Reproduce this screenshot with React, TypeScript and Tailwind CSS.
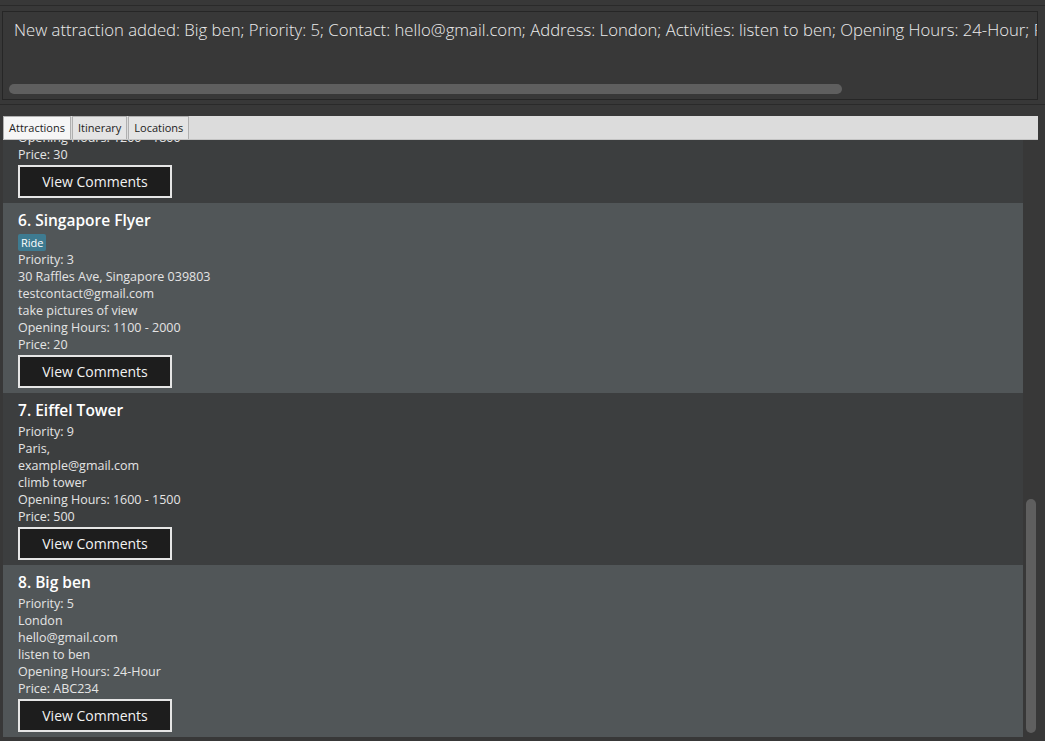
import React from 'react'

type Attraction = {
  index: number
  name: string
  tag?: string
  lines: string[]
}

const attractions: Attraction[] = [
  {
    index: 6,
    name: 'Singapore Flyer',
    tag: 'Ride',
    lines: ['Priority: 3', '30 Raffles Ave, Singapore 039803', 'testcontact@gmail.com', 'take pictures of view', 'Opening Hours: 1100 - 2000', 'Price: 20'],
  },
  {
    index: 7,
    name: 'Eiffel Tower',
    lines: ['Priority: 9', 'Paris,', 'example@gmail.com', 'climb tower', 'Opening Hours: 1600 - 1500', 'Price: 500'],
  },
  {
    index: 8,
    name: 'Big ben',
    lines: ['Priority: 5', 'London', 'hello@gmail.com', 'listen to ben', 'Opening Hours: 24-Hour', 'Price: ABC234'],
  },
]

const CommentsButton = () => (
  <button className="mt-[2px] h-[33px] w-[154px] border-2 border-[#e6e6e6] bg-[#1d1d1d] text-[14px] text-[#f2f2f2]">
    View Comments
  </button>
)

const Card = ({ item, odd }: { item: Attraction; odd: boolean }) => (
  <div className={`px-[15px] pt-[6px] pb-[5px] ${odd ? 'bg-[#515658]' : 'bg-[#3c3e3f]'}`}>
    <div className="h-[22px] text-[15.5px] font-semibold leading-[22px] text-white">
      {item.index}. {item.name}
    </div>
    {item.tag ? (
      <div className="mt-[2px] flex h-[18px] items-end">
        <span className="h-[17px] rounded-[2px] bg-[#3e7b91] px-[3px] text-[11px] leading-[17px] text-white">{item.tag}</span>
      </div>
    ) : (
      <div className="h-[2px]" />
    )}
    <div className="text-[12.5px] leading-[17px] text-[#e4e4e4]">
      {item.lines.map((l) => (
        <div key={l}>{l}</div>
      ))}
    </div>
    <CommentsButton />
  </div>
)

export default function App() {
  return (
    <div className="h-[741px] w-[1045px] overflow-hidden bg-[#383838]" style={{ fontFamily: '"Open Sans", "Noto Sans", sans-serif' }}>
      <div className="h-[5px]" />
      <div className="h-px bg-[#2a2a2a]" />
      <div className="px-[2px] pt-[5px] pr-[7px]">
        <div className="relative h-[89px] overflow-hidden border border-[#262626] bg-[#383838]">
          <div className="whitespace-nowrap pl-[11px] pt-[7px] text-[16.7px] font-light leading-[22px] text-[#ececec]">
            New attraction added: Big ben; Priority: 5; Contact: hello@gmail.com; Address: London; Activities: listen to ben; Opening Hours: 24-Hour; Price: ABC234; Tags: Ride
          </div>
          <div className="absolute left-[6px] top-[72px] h-[10px] w-[833px] rounded-[5px] bg-[#5f5f5f]" />
        </div>
      </div>
      <div className="mt-[4px] h-px bg-[#2a2a2a]" />
      <div className="h-[11px]" />
      <div className="ml-[3px] mr-[7px] flex h-[24px] items-end border-b border-[#c4c4c4] bg-[#dcdcdc] text-[11px] leading-[14px] text-[#222]">
        <div className="flex h-[23px] items-center border border-b-0 border-[#b0b0b0] bg-[#f6f6f6] px-[5px]">Attractions</div>
        <div className="ml-px flex h-[23px] items-center border border-b-0 border-[#b0b0b0] bg-[#e4e4e4] px-[5px]">Itinerary</div>
        <div className="ml-px flex h-[23px] items-center border border-b-0 border-[#b0b0b0] bg-[#e4e4e4] px-[5px]">Locations</div>
      </div>
      <div className="flex h-[597px]">
        <div className="ml-[3px] w-[1020px] overflow-hidden">
          <div className="mt-[-11px] bg-[#3c3e3f] px-[15px] pb-[5px]">
            <div className="text-[12.5px] leading-[17px] text-[#e4e4e4]">
              <div>Opening Hours: 1200 - 1800</div>
              <div>Price: 30</div>
            </div>
            <CommentsButton />
          </div>
          {attractions.map((a, i) => (
            <Card key={a.index} item={a} odd={i % 2 === 0} />
          ))}
        </div>
        <div className="flex-1 pl-[3px] pt-[359px]">
          <div className="h-[234px] w-[10px] rounded-[5px] bg-[#5f5f5f]" />
        </div>
      </div>
    </div>
  )
}
